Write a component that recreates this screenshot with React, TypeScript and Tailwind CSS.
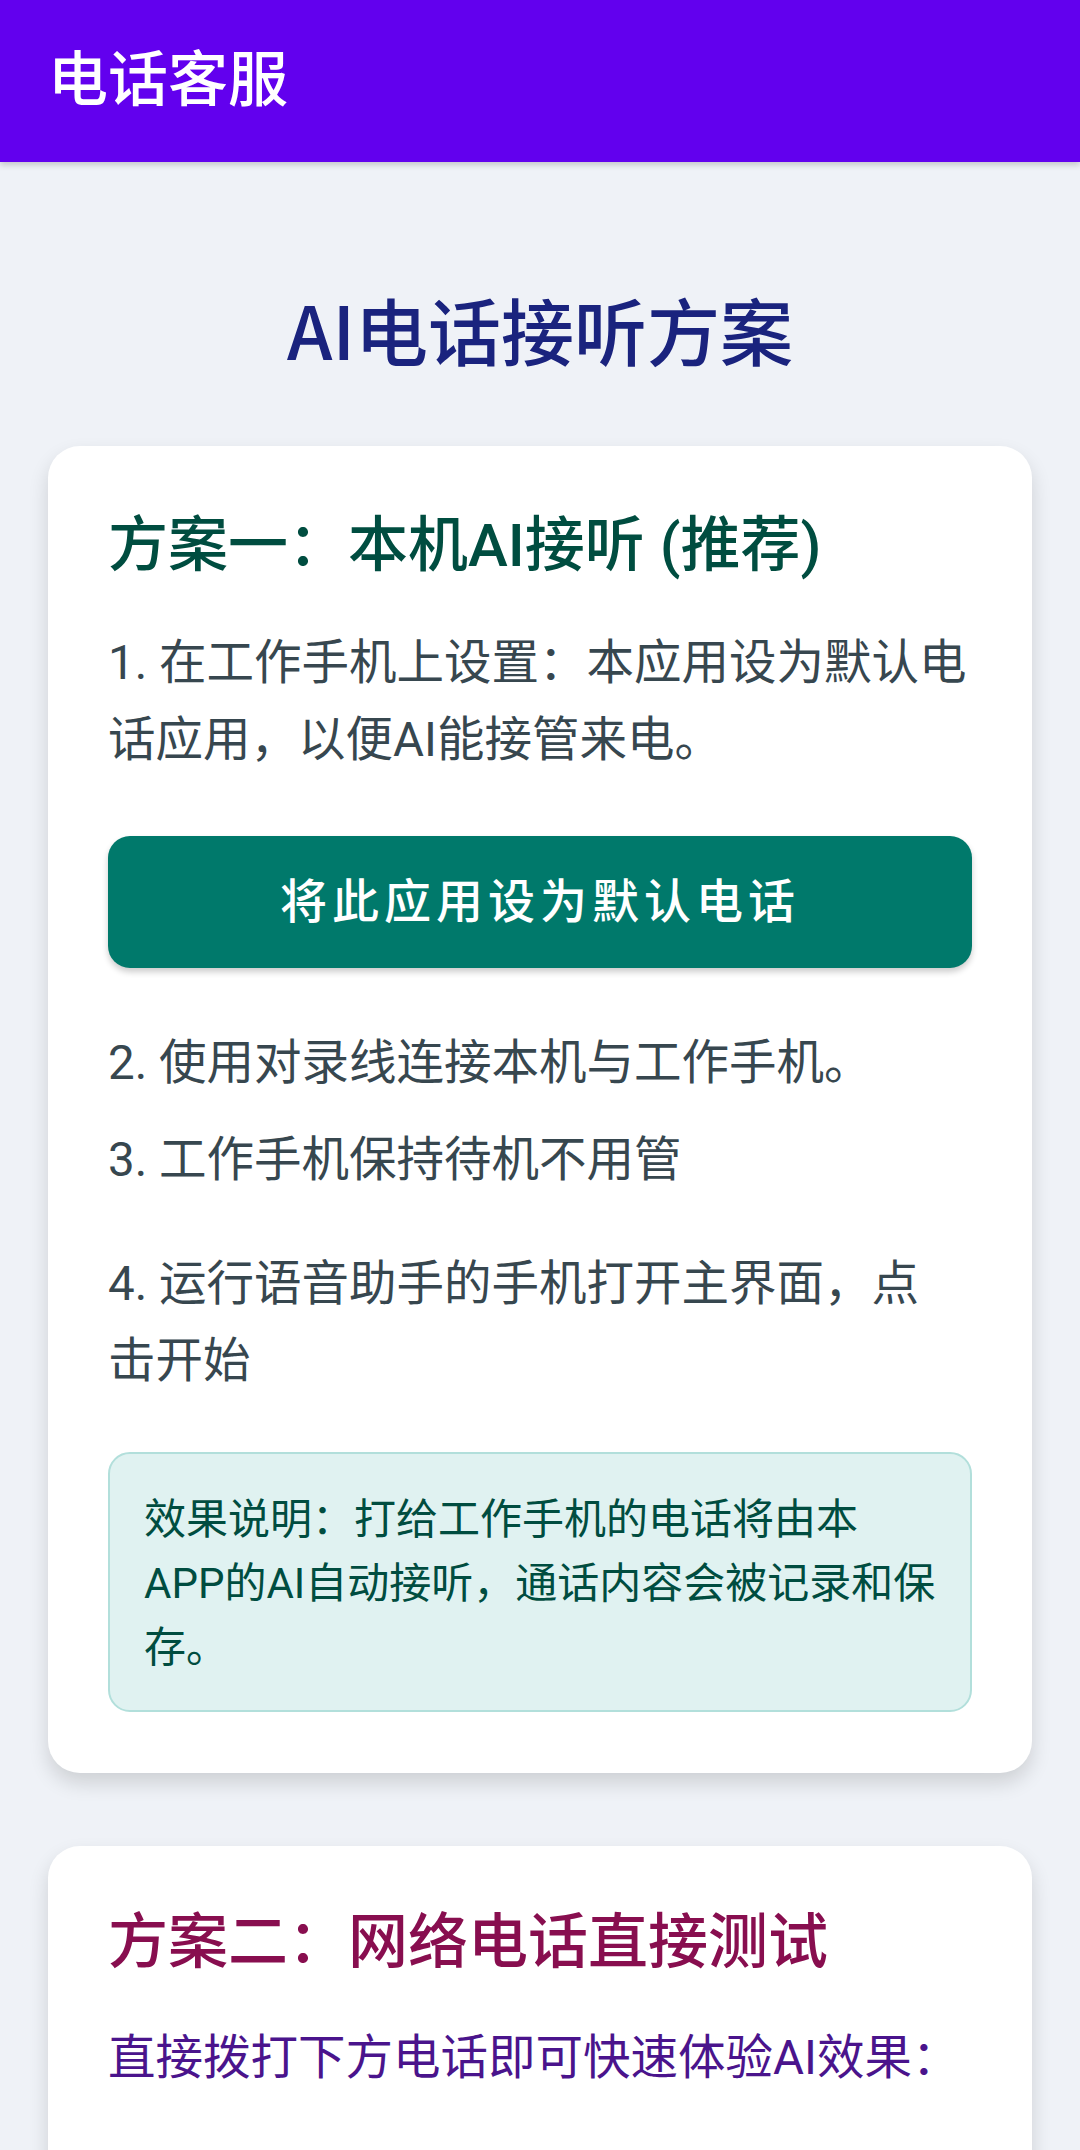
import React from "react";

const FONT = "font-['Roboto','Noto_Sans_CJK_SC',sans-serif]";

export default function App() {
  return (
    <div className={`min-h-[2150px] w-[1080px] bg-[#eff2f7] ${FONT}`}>
      <header className="relative z-10 flex h-[162px] items-center bg-[#6200ee] pl-[48px] shadow-[0_3px_6px_rgba(0,0,0,0.18)]">
        <h1 className="text-[60px] font-medium leading-none text-white">电话客服</h1>
      </header>

      <main className="px-[48px] pt-[123px] pb-[80px]">
        <h2 className="mb-[75px] text-center text-[73px] font-medium leading-[86px] text-[#1a237e] font-['Noto_Sans_CJK_SC',sans-serif]">
          AI电话接听方案
        </h2>

        <section className="rounded-[32px] bg-white px-[60px] pt-[61px] pb-[61px] shadow-[0_10px_20px_rgba(0,0,0,0.14)]">
          <h3 className="whitespace-nowrap text-[60px] font-medium leading-[78px] text-[#004d40]">
            方案一：本机AI接听 (推荐)
          </h3>
          <p className="mt-[40px] whitespace-nowrap text-[47.5px] leading-[77px] text-[#37474f]">
            1. 在工作手机上设置：本应用设为默认电
            <br />
            话应用，以便AI能接管来电。
          </p>
          <button className="mt-[57px] flex h-[132px] w-full items-center justify-center rounded-[22px] bg-[#00796b] text-[47px] font-medium tracking-[5px] text-white shadow-[0_4px_6px_rgba(0,0,0,0.2)]">
            将此应用设为默认电话
          </button>
          <p className="mt-[57px] whitespace-nowrap text-[47.5px] leading-[77px] text-[#37474f]">
            2. 使用对录线连接本机与工作手机。
          </p>
          <p className="mt-[20px] whitespace-nowrap text-[47.5px] leading-[77px] text-[#37474f]">
            3. 工作手机保持待机不用管
          </p>
          <p className="mt-[47px] whitespace-nowrap text-[47.5px] leading-[77px] text-[#37474f]">
            4. 运行语音助手的手机打开主界面，点
            <br />
            击开始
          </p>
          <div className="mt-[52px] rounded-[22px] border-2 border-[#b2dfdb] bg-[#e0f2f1] px-[34px] pt-[34px] pb-[30px]">
            <p className="whitespace-nowrap text-[42px] leading-[64px] text-[#004d40]">
              效果说明：打给工作手机的电话将由本
              <br />
              APP的AI自动接听，通话内容会被记录和保
              <br />
              存。
            </p>
          </div>
        </section>

        <section className="mt-[73px] rounded-[32px] bg-white px-[60px] pt-[58px] pb-[200px] shadow-[0_10px_20px_rgba(0,0,0,0.14)]">
          <h3 className="whitespace-nowrap text-[60px] font-medium leading-[78px] text-[#880e4f]">
            方案二：网络电话直接测试
          </h3>
          <p className="mt-[38px] whitespace-nowrap text-[47.5px] leading-[77px] text-[#4a148c]">
            直接拨打下方电话即可快速体验AI效果：
          </p>
        </section>
      </main>
    </div>
  );
}
